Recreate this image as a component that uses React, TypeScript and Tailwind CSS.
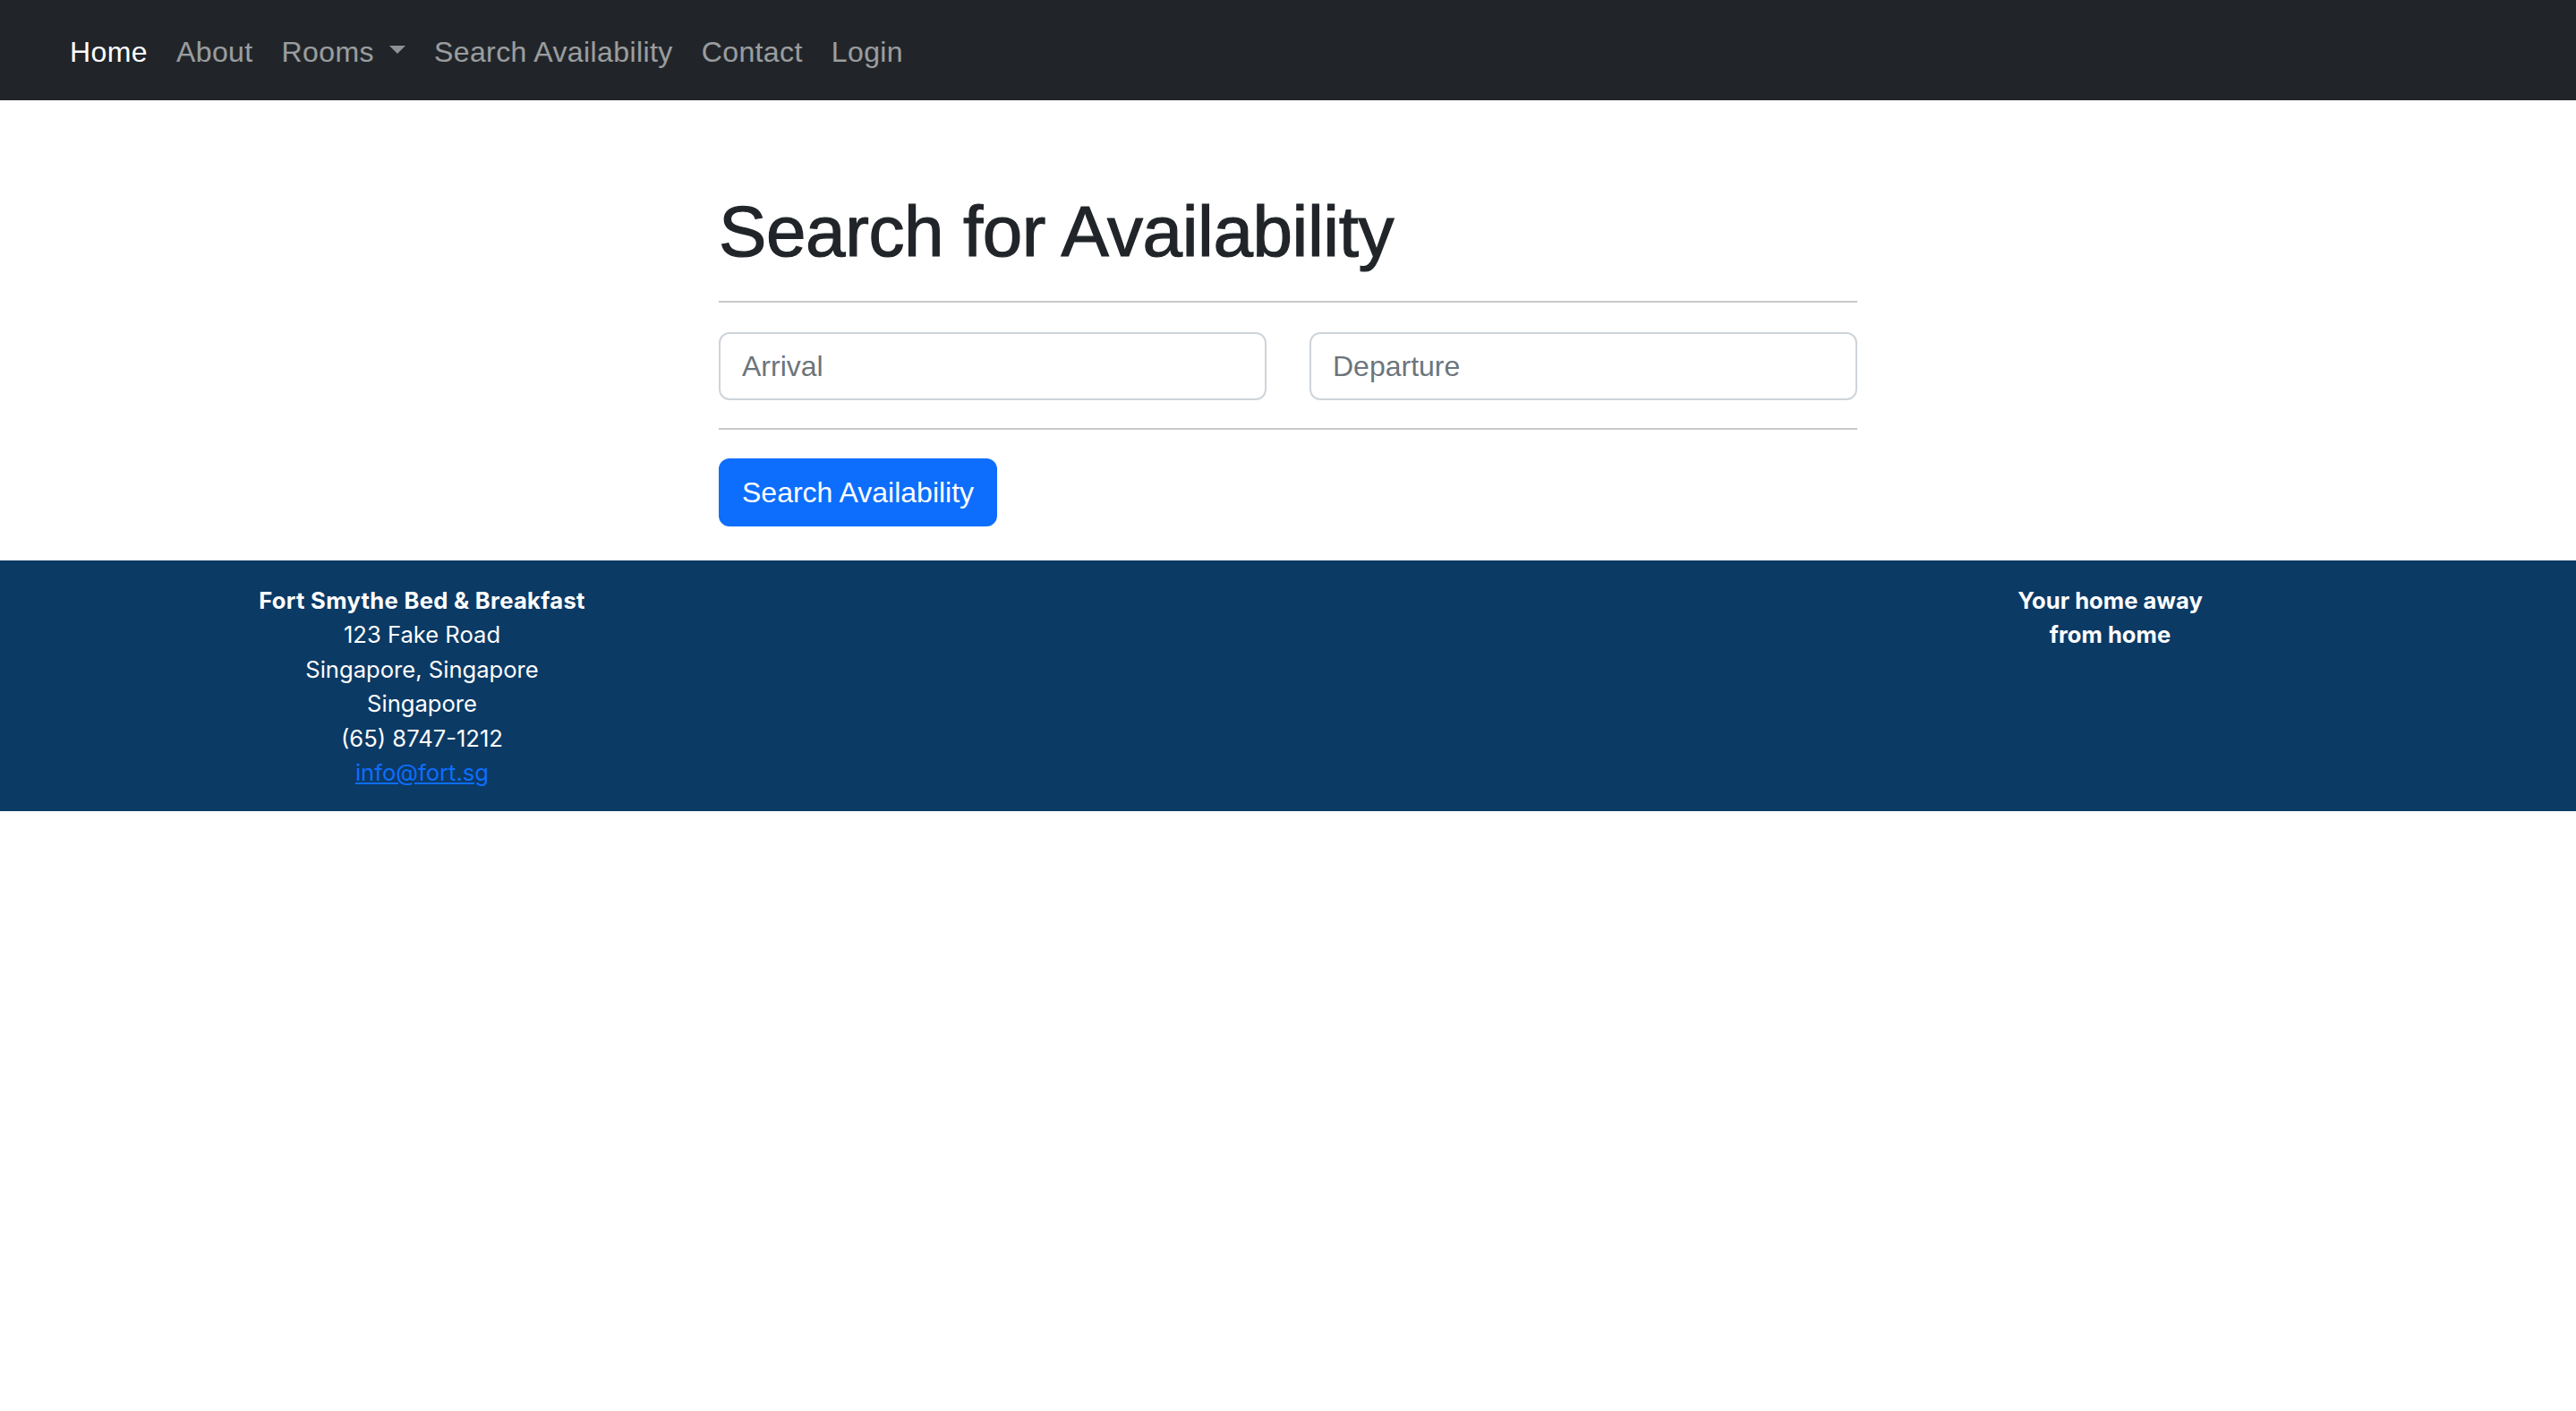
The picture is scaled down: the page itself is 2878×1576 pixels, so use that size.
const links = ["About", "Rooms", "Search Availability", "Contact", "Login"];

function NavLink({ label }: { label: string }) {
    if (label === "Rooms") {
        return (
            <a href="#" className="flex items-center px-[16px] text-white/55">
                <span>Rooms</span>
                <span className="ml-[17px] -translate-y-[2px] inline-block w-0 h-0 border-t-[9px] border-t-[#8f9193] border-x-[9.6px] border-x-transparent" />
            </a>
        );
    }
    return (
        <a href="#" className="px-[16px] text-white/55">
            {label}
        </a>
    );
}

export default function App() {
    return (
        <div className="min-h-screen bg-white font-['Liberation_Sans',Arial,sans-serif]">
            <nav className="h-[112px] bg-[#212529] flex items-center pl-[62px] pt-[3px] text-[32px] leading-[48px] tracking-[0.4px]">
                <a href="#" className="px-[16px] text-white">
                    Home
                </a>
                {links.map((l) => (
                    <NavLink key={l} label={l} />
                ))}
            </nav>

            <main className="w-[1272px] mx-auto">
                <h1 className="mt-[99px] text-[80px] leading-[96px] tracking-[-0.4px] text-[#212529] [-webkit-text-stroke:1.2px_#212529]">
                    Search for Availability
                </h1>
                <hr className="mt-[29px] border-0 border-t-2 border-[#c8c9ca]" />

                <div className="mt-[33px] grid grid-cols-2 gap-[48px]">
                    <input
                        type="text"
                        placeholder="Arrival"
                        className="h-[76px] px-[24px] border-2 border-[#ced4da] rounded-[12px] text-[32px] text-[#212529] placeholder:text-[#6c757d] outline-none"
                    />
                    <input
                        type="text"
                        placeholder="Departure"
                        className="h-[76px] px-[24px] border-2 border-[#ced4da] rounded-[12px] text-[32px] text-[#212529] placeholder:text-[#6c757d] outline-none"
                    />
                </div>

                <hr className="mt-[31px] border-0 border-t-2 border-[#c8c9ca]" />

                <button className="mt-[32px] h-[76px] px-[24px] bg-[#0d6efd] border-2 border-[#0d6efd] rounded-[12px] text-[32px] text-white">
                    Search Availability
                </button>
            </main>

            <footer className="mt-[38px] h-[280px] bg-[#0b3a65] text-white font-['Inter',sans-serif] text-[25.6px] leading-[38.4px] pt-[26px]">
                <div className="w-[2829px] grid grid-cols-3">
                    <div className="text-center">
                        <strong className="font-bold tracking-[0.3px]">Fort Smythe Bed &amp; Breakfast</strong>
                        <br />
                        123 Fake Road
                        <br />
                        Singapore, Singapore
                        <br />
                        Singapore
                        <br />
                        (65) 8747-1212
                        <br />
                        <a href="#" className="text-[#0d6efd] underline">
                            info@fort.sg
                        </a>
                    </div>
                    <div></div>
                    <div className="text-center">
                        <strong className="font-bold">
                            Your home away
                            <br />
                            from home
                        </strong>
                    </div>
                </div>
            </footer>
        </div>
    );
}
